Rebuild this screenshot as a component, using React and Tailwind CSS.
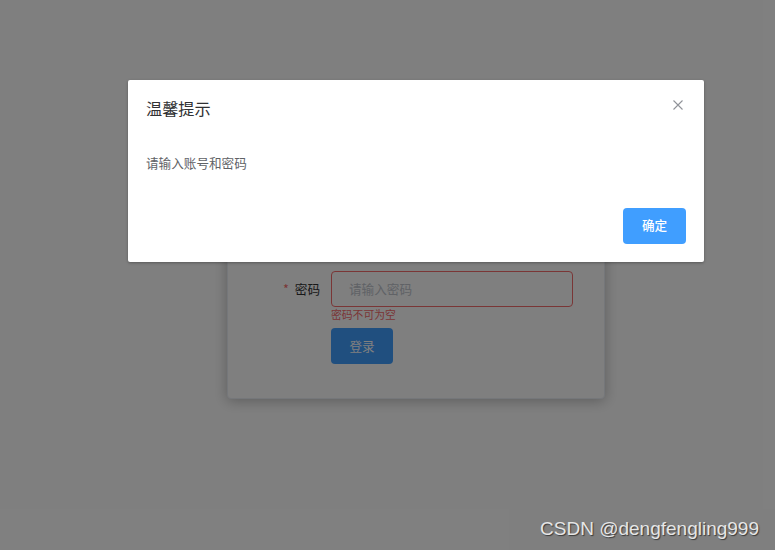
import React from "react";

const font = { fontFamily: '"Noto Sans CJK SC", "Noto Sans", sans-serif' };

const LoginCard = () => {
  return (
    <div className="ml-[227px] mt-[150px] w-[378px] rounded-[4px] border border-[#ebeef5] bg-white pt-[20px] pb-[34px] pr-[31px] shadow-[0_2px_14px_rgba(0,0,0,0.28)]">
      <div className="mb-[20px] pl-[103px] text-[16px] leading-[24px] text-[#303133]">用户登录</div>
      <div className="mb-[20px] flex items-start">
        <label className="flex h-[36px] w-[103px] shrink-0 items-center justify-end pr-[11px] text-[12.6px] text-[#606266]">
          <span className="mr-[4px] text-[#f56c6c]">*</span>账号
        </label>
        <div className="flex h-[36px] flex-1 items-center rounded-[4px] border border-[#dcdfe6] px-[16px] text-[12.6px] text-[#c0c4cc]">
          请输入账号
        </div>
      </div>
      <div className="mb-[21px] flex items-start">
        <label className="flex h-[36px] w-[103px] shrink-0 items-center justify-end pr-[11px] text-[12.6px] text-[#303133]">
          <span className="mr-[6px] text-[#f56c6c]">*</span>密码
        </label>
        <div className="relative flex-1">
          <div className="flex h-[36px] items-center rounded-[4px] border border-[#f56c6c] px-[17px] text-[12.6px] text-[#c0c4cc]">
            请输入密码
          </div>
          <div className="absolute left-0 top-[38px] text-[10.8px] leading-none text-[#f56c6c]">密码不可为空</div>
        </div>
      </div>
      <div className="flex">
        <div className="w-[103px] shrink-0" />
        <button className="flex h-[36px] w-[62px] items-center justify-center rounded-[4px] bg-[#409eff] text-[12.6px] text-white">
          登录
        </button>
      </div>
    </div>
  );
};

const Dialog = () => {
  return (
    <div className="ml-[128px] mt-[80px] w-[576px] rounded-[2px] bg-white shadow-[0_1px_3px_rgba(0,0,0,0.3)]">
      <div className="flex items-start justify-between px-[18px] pt-[18px] pb-[9px]">
        <span className="text-[16.2px] leading-[21.6px] text-[#303133]">温馨提示</span>
        <button className="mr-[1px] flex h-[14px] w-[14px] items-center justify-center">
          <svg width="10" height="10" viewBox="0 0 10 10" fill="none" stroke="#909399" strokeWidth="1.1">
            <path d="M0.5 0.5 L9.5 9.5 M9.5 0.5 L0.5 9.5" />
          </svg>
        </button>
      </div>
      <div className="px-[18px] pt-[26px] pb-[28px] text-[12.6px] leading-[16px] text-[#606266]">请输入账号和密码</div>
      <div className="flex justify-end px-[18px] pt-[9px] pb-[18px]">
        <button className="flex h-[36px] w-[63px] items-center justify-center rounded-[4px] bg-[#409eff] text-[12.6px] font-medium text-white">
          确定
        </button>
      </div>
    </div>
  );
};

export default function App() {
  return (
    <div className="relative h-[550px] w-full overflow-hidden bg-white" style={font}>
      <div className="flex flex-col">
        <LoginCard />
      </div>
      <div className="absolute inset-0 bg-black/50">
        <Dialog />
      </div>
      <div
        className="absolute bottom-[9px] right-[16px] text-[19px] leading-[24px] text-[#e6e6e6] [text-shadow:1px_1px_1px_rgba(0,0,0,0.55)]"
        style={{ fontFamily: '"Liberation Sans", Arial, sans-serif' }}
      >
        CSDN @dengfengling999
      </div>
    </div>
  );
}
